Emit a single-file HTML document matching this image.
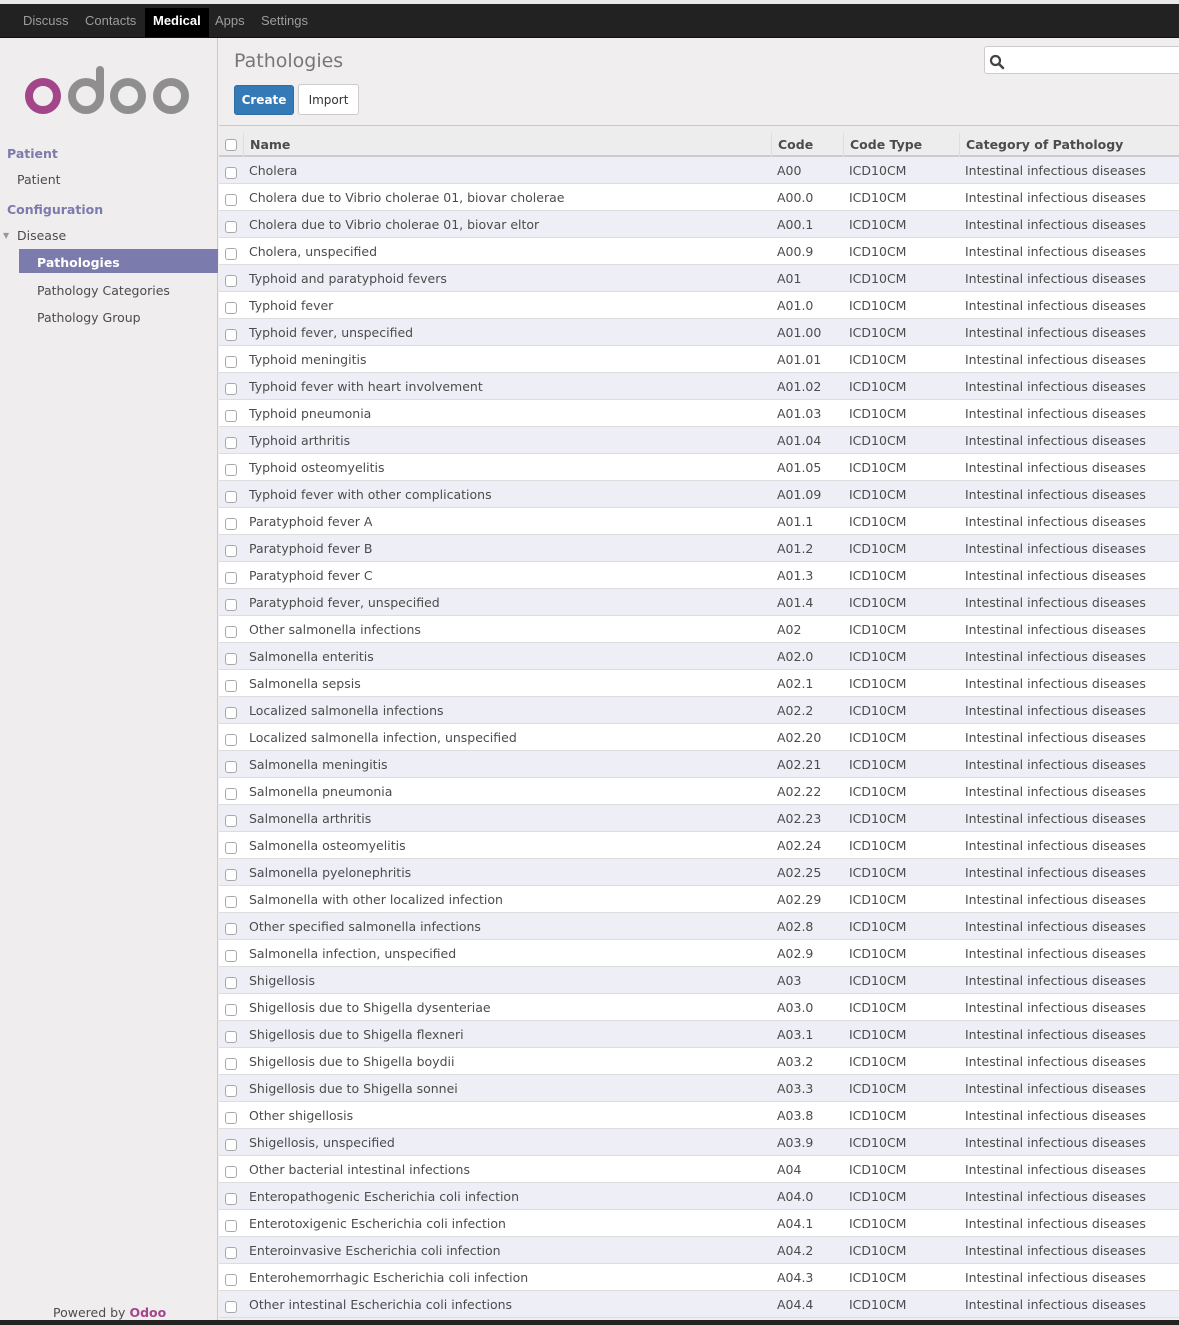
<!DOCTYPE html>
<html><head><meta charset="utf-8"><style>
*{margin:0;padding:0;box-sizing:border-box}
body{width:1179px;height:1325px;overflow:hidden;background:#f0eeee;font-family:"DejaVu Sans","Liberation Sans",sans-serif;font-size:12px;color:#4c4c4c;position:relative}
.top{position:absolute;left:0;top:0;width:1179px;height:4px;background:#e8e8e8}
.bar{position:absolute;left:0;top:4px;width:1179px;height:34px;background:#222;border-bottom:1px solid #111}
.bar span{position:absolute;top:4px;height:29px;line-height:26px;font-family:"Liberation Sans",sans-serif;font-size:13px;color:#9d9d9d}
.bar .act{top:4px;background:#000;color:#fff;font-weight:bold;padding:0 8px}
.side{position:absolute;left:0;top:38px;width:218px;height:1282px;background:#efeded;border-right:1px solid #c9c9c9}
.side div{position:absolute;font-size:12.5px}
.hd{color:#7c7bad;font-weight:bold}
.main{position:absolute;left:219px;top:38px;width:960px;height:1282px;background:#f0eeee}
.row{position:absolute;left:219px;width:960px;height:27px;border-bottom:1px solid #ddd;font-size:12.5px;line-height:28px}
.row span{position:absolute;top:0;white-space:nowrap}
.cb{position:absolute;left:6px;top:10px;width:12px;height:12px;border:1px solid #a9a9a9;border-radius:3px;background:#fff}
.c1{left:30px}.c2{left:558px}.c3{left:630px}.c4{left:746px}
</style></head><body>
<div class="top"></div>
<div class="bar">
<span style="left:23px">Discuss</span>
<span style="left:85px">Contacts</span>
<span class="act" style="left:145px">Medical</span>
<span style="left:215px">Apps</span>
<span style="left:261px">Settings</span>
</div>
<div class="side">
<svg style="position:absolute;left:24px;top:24px" width="170" height="60" viewBox="0 0 170 60">
<circle cx="19" cy="34" r="14" fill="none" stroke="#a24689" stroke-width="8"/>
<circle cx="62" cy="34" r="14" fill="none" stroke="#8f8f8f" stroke-width="8"/>
<line x1="76" y1="8" x2="76" y2="34" stroke="#8f8f8f" stroke-width="8" stroke-linecap="round"/>
<circle cx="104" cy="34" r="14" fill="none" stroke="#8f8f8f" stroke-width="8"/>
<circle cx="147" cy="34" r="14" fill="none" stroke="#8f8f8f" stroke-width="8"/>
</svg>
<div class="hd" style="left:7px;top:108px">Patient</div>
<div style="left:17px;top:134px">Patient</div>
<div class="hd" style="left:7px;top:164px">Configuration</div>
<div style="left:3px;font-size:8px;color:#999;top:193px">&#9660;</div>
<div style="left:17px;top:190px">Disease</div>
<div style="left:19px;top:211px;width:199px;height:24px;background:#7c7bad"></div>
<div style="left:37px;top:217px;color:#fff;font-weight:bold">Pathologies</div>
<div style="left:37px;top:245px">Pathology Categories</div>
<div style="left:37px;top:272px">Pathology Group</div>
<div style="left:53px;top:1267px">Powered by <b style="color:#a24689">Odoo</b></div>
</div>
<div class="main">
<div style="position:absolute;left:15px;top:12px;font-size:19px;color:#777">Pathologies</div>
<div style="position:absolute;left:15px;top:47px;width:60px;height:30px;background:#337ab7;border:1px solid #2e6da4;border-radius:3px;color:#fff;font-weight:bold;font-size:12px;line-height:28px;text-align:center">Create</div>
<div style="position:absolute;left:79px;top:46px;width:61px;height:31px;background:#fff;border:1px solid #ccc;border-radius:3px;color:#333;font-size:12px;line-height:30px;text-align:center">Import</div>
<div style="position:absolute;left:765px;top:8px;width:200px;height:28px;background:#fff;border:1px solid #ccc;border-radius:3px"></div>
<svg style="position:absolute;left:770px;top:16px" width="16" height="16" viewBox="0 0 16 16"><circle cx="6.5" cy="6.5" r="4.5" fill="none" stroke="#444" stroke-width="2.2"/><line x1="10" y1="10" x2="14" y2="14" stroke="#444" stroke-width="2.6" stroke-linecap="round"/></svg>
<div style="position:absolute;left:0;top:87px;width:960px;height:32px;background:#eeeded;border-top:1px solid #c8c8c8;border-bottom:2px solid #ccc"></div>
</div>
<div style="position:absolute;left:219px;top:126px;width:960px;height:31px;font-weight:bold;font-size:12.5px;line-height:37px;color:#4c4c4c">
<div class="cb" style="top:13px"></div>
<div style="position:absolute;left:24px;top:7px;height:24px;border-left:1px solid #ddd"></div>
<div style="position:absolute;left:552px;top:7px;height:24px;border-left:1px solid #ddd"></div>
<div style="position:absolute;left:624px;top:7px;height:24px;border-left:1px solid #ddd"></div>
<div style="position:absolute;left:740px;top:7px;height:24px;border-left:1px solid #ddd"></div>
<span style="position:absolute;left:31px">Name</span>
<span style="position:absolute;left:559px">Code</span>
<span style="position:absolute;left:631px">Code Type</span>
<span style="position:absolute;left:747px">Category of Pathology</span>
</div>
<div id="rows"></div>
<script>
var d=[["Cholera","A00"],["Cholera due to Vibrio cholerae 01, biovar cholerae","A00.0"],["Cholera due to Vibrio cholerae 01, biovar eltor","A00.1"],["Cholera, unspecified","A00.9"],["Typhoid and paratyphoid fevers","A01"],["Typhoid fever","A01.0"],["Typhoid fever, unspecified","A01.00"],["Typhoid meningitis","A01.01"],["Typhoid fever with heart involvement","A01.02"],["Typhoid pneumonia","A01.03"],["Typhoid arthritis","A01.04"],["Typhoid osteomyelitis","A01.05"],["Typhoid fever with other complications","A01.09"],["Paratyphoid fever A","A01.1"],["Paratyphoid fever B","A01.2"],["Paratyphoid fever C","A01.3"],["Paratyphoid fever, unspecified","A01.4"],["Other salmonella infections","A02"],["Salmonella enteritis","A02.0"],["Salmonella sepsis","A02.1"],["Localized salmonella infections","A02.2"],["Localized salmonella infection, unspecified","A02.20"],["Salmonella meningitis","A02.21"],["Salmonella pneumonia","A02.22"],["Salmonella arthritis","A02.23"],["Salmonella osteomyelitis","A02.24"],["Salmonella pyelonephritis","A02.25"],["Salmonella with other localized infection","A02.29"],["Other specified salmonella infections","A02.8"],["Salmonella infection, unspecified","A02.9"],["Shigellosis","A03"],["Shigellosis due to Shigella dysenteriae","A03.0"],["Shigellosis due to Shigella flexneri","A03.1"],["Shigellosis due to Shigella boydii","A03.2"],["Shigellosis due to Shigella sonnei","A03.3"],["Other shigellosis","A03.8"],["Shigellosis, unspecified","A03.9"],["Other bacterial intestinal infections","A04"],["Enteropathogenic Escherichia coli infection","A04.0"],["Enterotoxigenic Escherichia coli infection","A04.1"],["Enteroinvasive Escherichia coli infection","A04.2"],["Enterohemorrhagic Escherichia coli infection","A04.3"],["Other intestinal Escherichia coli infections","A04.4"]];
var h="";
d.forEach(function(r,i){h+='<div class="row" style="top:'+(157+27*i)+'px;background:'+(i%2?'#fff':'#eeeef6')+'"><div class="cb"></div><span class="c1">'+r[0]+'</span><span class="c2">'+r[1]+'</span><span class="c3">ICD10CM</span><span class="c4">Intestinal infectious diseases</span></div>';});
document.getElementById("rows").innerHTML=h;
</script>
<div style="position:absolute;left:0;top:1320px;width:1179px;height:5px;background:#222"></div>
</body></html>
